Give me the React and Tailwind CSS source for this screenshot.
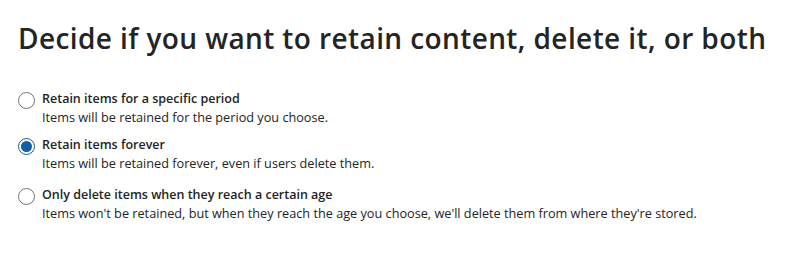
import React, { useState } from 'react';

const options = [
  {
    id: 'period',
    label: 'Retain items for a specific period',
    desc: 'Items will be retained for the period you choose.',
    gap: 'mt-0',
  },
  {
    id: 'forever',
    label: 'Retain items forever',
    desc: 'Items will be retained forever, even if users delete them.',
    gap: 'mt-[10px]',
  },
  {
    id: 'delete',
    label: 'Only delete items when they reach a certain age',
    desc: "Items won't be retained, but when they reach the age you choose, we'll delete them from where they're stored.",
    gap: 'mt-[14px]',
  },
];

const Radio = ({ checked }) => (
  <span
    className={`mt-[2px] w-[17px] h-[17px] shrink-0 rounded-full border flex items-center justify-center bg-white ${
      checked ? 'border-[#115ea3]' : 'border-[#707070]'
    }`}
  >
    {checked && <span className="w-[11px] h-[11px] rounded-full bg-[#115ea3]" />}
  </span>
);

export default function App() {
  const [value, setValue] = useState('forever');

  return (
    <div className="w-[800px] h-[258px] bg-white px-[18px] pt-[20px] text-[#242424] font-['Open_Sans',sans-serif]">
      <h1 className="text-[28px] leading-[36px] font-semibold tracking-[0.4px]">
        Decide if you want to retain content, delete it, or both
      </h1>

      <div className="mt-[34px] flex flex-col">
        {options.map(opt => (
          <label
            key={opt.id}
            onClick={() => setValue(opt.id)}
            className={`flex items-start gap-[7px] cursor-pointer ${opt.gap}`}
          >
            <Radio checked={value === opt.id} />
            <div>
              <div className="text-[12.5px] leading-[18px] font-semibold">{opt.label}</div>
              <div className="text-[12.7px] leading-[18px]">{opt.desc}</div>
            </div>
          </label>
        ))}
      </div>
    </div>
  );
}
